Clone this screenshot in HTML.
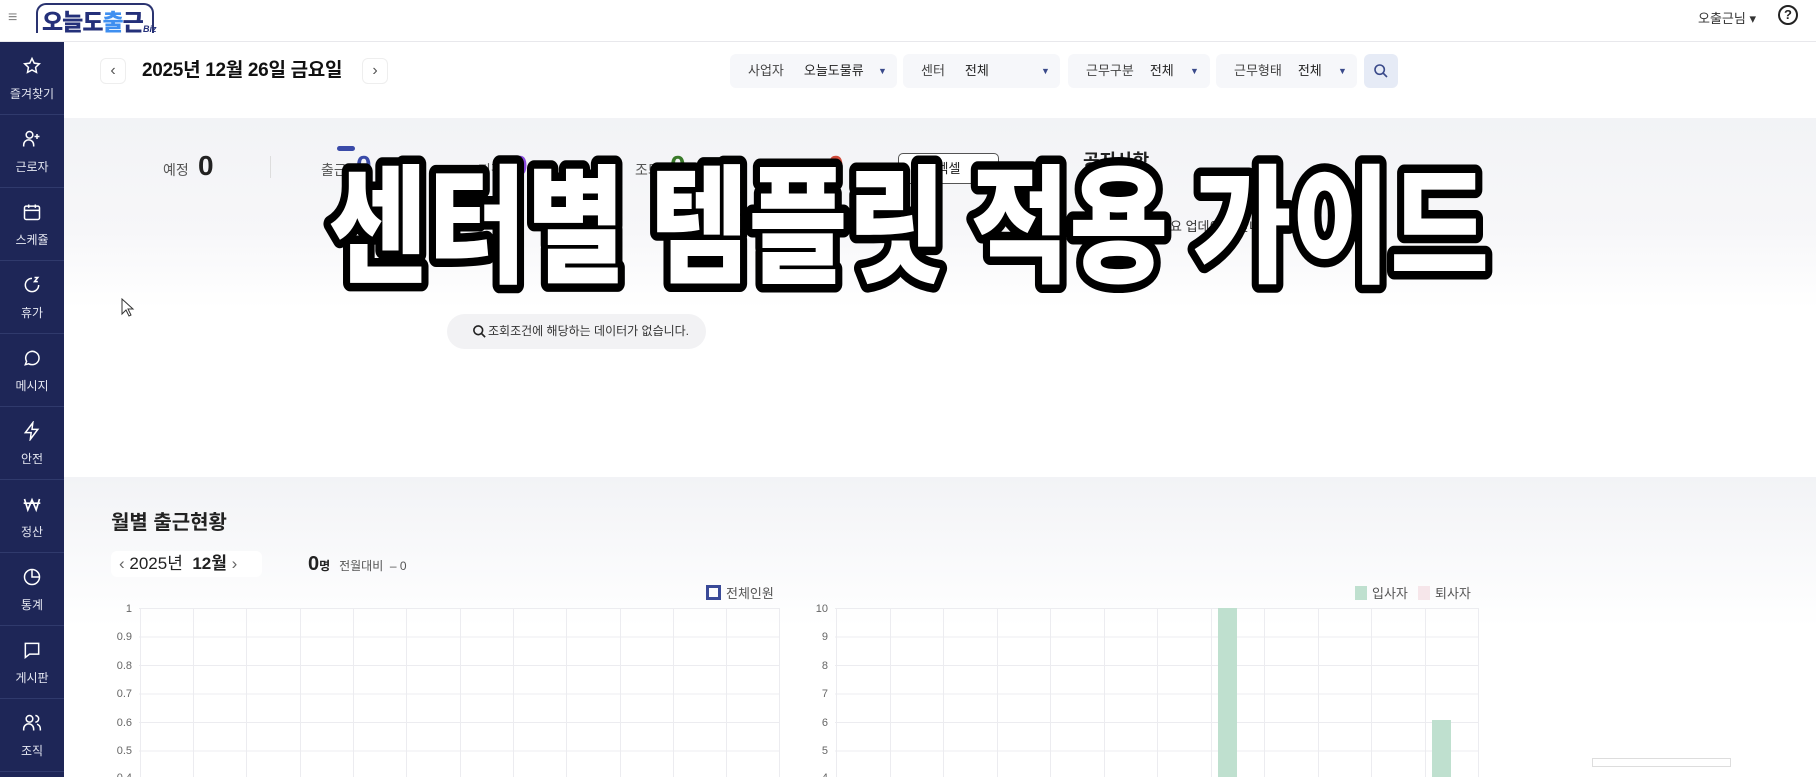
<!DOCTYPE html>
<html><head><meta charset="utf-8"><style>
*{margin:0;padding:0;box-sizing:border-box}
body{width:1816px;height:777px;overflow:hidden;background:#fff;font-family:"Liberation Sans","Noto Sans CJK KR",sans-serif;color:#222;position:relative}
.a{position:absolute}
#hdr{left:0;top:0;width:1816px;height:42px;background:#fff;border-bottom:1px solid #e8e8ec}
#side{left:0;top:42px;width:64px;height:735px;background:#1e2657}
.si{position:absolute;left:0;width:64px;height:73px;border-bottom:1px solid #303a6c;color:#e6e8f2;text-align:center;font-size:12px}
.si svg{position:absolute;left:22px;top:14px}
.si span{position:absolute;left:0;right:0;top:43px}
.g1{left:64px;top:118px;width:1752px;height:190px;background:linear-gradient(#f2f3f6,#f7f7f9 60%,#fff)}
.g2{left:64px;top:477px;width:1752px;height:150px;background:linear-gradient(#f2f3f6,#fff)}
.flt{top:54px;height:34px;background:#f6f7fa;border-radius:6px;font-size:13px;color:#444;line-height:34px}
.tri{position:absolute;top:0;font-size:9px;color:#3a4a8a}
</style></head><body>
<div class="a" id="hdr"></div>
<div class="a" style="left:8px;top:9px;font-size:16px;color:#888">≡</div>
<div class="a" style="left:36px;top:3px;width:118px;height:30px;border:2px solid #2a3370;border-bottom:none;border-radius:10px 10px 0 0;background:#fff"></div>
<div class="a" style="left:42px;top:8px;font-size:23px;font-weight:900;color:#24307a;letter-spacing:-1px;line-height:28px">오늘도<span style="color:#3f8ff0">출</span>근</div>
<div class="a" style="left:143px;top:24px;font-size:9px;font-style:italic;font-weight:bold;color:#24307a">Biz</div>
<div class="a" style="left:1698px;top:8px;font-size:13px;color:#333">오출근님 ▾</div>
<div class="a" style="left:1778px;top:5px;width:20px;height:20px;border:2px solid #222;border-radius:50%;text-align:center;font-size:13px;font-weight:bold;line-height:16px">?</div>

<div class="a" id="side">
<div class="si" style="top:0"><svg width="20" height="20" viewBox="0 0 24 24" fill="none" stroke="#fff" stroke-width="1.8"><path d="M12 3l2.7 5.6 6.1.8-4.5 4.2 1.1 6.1L12 16.8 6.6 19.7l1.1-6.1L3.2 9.4l6.1-.8z"/></svg><span>즐겨찾기</span></div>
<div class="si" style="top:73px"><svg width="20" height="20" viewBox="0 0 24 24" fill="none" stroke="#fff" stroke-width="1.8"><circle cx="9" cy="7" r="4"/><path d="M2 21v-2a6 6 0 0112 0v2M18 6v6M15 9h6"/></svg><span>근로자</span></div>
<div class="si" style="top:146px"><svg width="20" height="20" viewBox="0 0 24 24" fill="none" stroke="#fff" stroke-width="1.8"><rect x="3" y="5" width="18" height="16" rx="2"/><path d="M3 10h18M8 3v4M16 3v4"/></svg><span>스케쥴</span></div>
<div class="si" style="top:219px"><svg width="20" height="20" viewBox="0 0 24 24" fill="none" stroke="#fff" stroke-width="1.8"><path d="M20 12a8 8 0 11-8-8"/><path d="M15 3h4l-4 5h4"/></svg><span>휴가</span></div>
<div class="si" style="top:292px"><svg width="20" height="20" viewBox="0 0 24 24" fill="none" stroke="#fff" stroke-width="1.8"><path d="M4 20l1.5-4A8 8 0 1112 20a8 8 0 01-4-1z"/></svg><span>메시지</span></div>
<div class="si" style="top:365px"><svg width="20" height="20" viewBox="0 0 24 24" fill="none" stroke="#fff" stroke-width="1.8"><path d="M13 2L4 14h7l-1 8 9-12h-7z"/></svg><span>안전</span></div>
<div class="si" style="top:438px"><svg width="20" height="20" viewBox="0 0 24 24" fill="none" stroke="#fff" stroke-width="2"><path d="M3 6l4 13 5-12 5 12 4-13M2 11h20"/></svg><span>정산</span></div>
<div class="si" style="top:511px"><svg width="20" height="20" viewBox="0 0 24 24" fill="none" stroke="#fff" stroke-width="1.8"><circle cx="12" cy="12" r="9"/><path d="M12 3v9h9"/></svg><span>통계</span></div>
<div class="si" style="top:584px"><svg width="20" height="20" viewBox="0 0 24 24" fill="none" stroke="#fff" stroke-width="1.8"><path d="M4 4h16v13H9l-5 4z"/></svg><span>게시판</span></div>
<div class="si" style="top:657px"><svg width="20" height="20" viewBox="0 0 24 24" fill="none" stroke="#fff" stroke-width="1.8"><circle cx="9" cy="7" r="4"/><path d="M2 21v-2a6 6 0 0112 0v2M16 3a4 4 0 010 8M22 21v-2a6 6 0 00-4-5.6"/></svg><span>조직</span></div>
</div>

<div class="a" style="left:100px;top:58px;width:26px;height:26px;border:1px solid #eee;border-radius:6px;text-align:center;line-height:24px;color:#555">‹</div>
<div class="a" style="left:142px;top:58px;font-size:19px;font-weight:bold;color:#111;line-height:26px;letter-spacing:-0.3px">2025년 12월 26일 금요일</div>
<div class="a" style="left:362px;top:58px;width:26px;height:26px;border:1px solid #eee;border-radius:6px;text-align:center;line-height:24px;color:#555">›</div>

<div class="a flt" style="left:730px;width:167px"><span style="margin-left:18px">사업자</span><span style="margin-left:20px;color:#222">오늘도물류</span><span class="tri" style="left:148px">▼</span></div>
<div class="a flt" style="left:903px;width:157px"><span style="margin-left:18px">센터</span><span style="margin-left:20px;color:#222">전체</span><span class="tri" style="left:138px">▼</span></div>
<div class="a flt" style="left:1068px;width:142px"><span style="margin-left:18px">근무구분</span><span style="margin-left:16px;color:#222">전체</span><span class="tri" style="left:122px">▼</span></div>
<div class="a flt" style="left:1216px;width:141px"><span style="margin-left:18px">근무형태</span><span style="margin-left:16px;color:#222">전체</span><span class="tri" style="left:122px">▼</span></div>
<div class="a" style="left:1364px;top:54px;width:34px;height:34px;background:#e6ebf6;border-radius:6px"><svg class="a" style="left:9px;top:9px" width="16" height="16" viewBox="0 0 24 24" fill="none" stroke="#3a4a8a" stroke-width="2.4"><circle cx="10" cy="10" r="7"/><path d="M15 15l6 6"/></svg></div>

<div class="a g1"></div>
<div class="a g2"></div>

<div class="a" style="left:163px;top:160px;font-size:14px;color:#555">예정</div>
<div class="a" style="left:198px;top:150px;font-size:28px;font-weight:bold;color:#222">0</div>
<div class="a" style="left:270px;top:156px;width:1px;height:22px;background:#ddd"></div>
<div class="a" style="left:337px;top:146px;width:18px;height:5px;background:#3a4aa8;border-radius:3px"></div>
<div class="a" style="left:321px;top:160px;font-size:14px;color:#555">출근</div>
<div class="a" style="left:356px;top:150px;font-size:28px;font-weight:bold;color:#3a4aa8">0</div>
<div class="a" style="left:478px;top:160px;font-size:14px;color:#555">지각</div>
<div class="a" style="left:512px;top:150px;font-size:28px;font-weight:bold;color:#8a4ae0">0</div>
<div class="a" style="left:635px;top:160px;font-size:14px;color:#555">조퇴</div>
<div class="a" style="left:670px;top:150px;font-size:28px;font-weight:bold;color:#3a7a2a">0</div>
<div class="a" style="left:793px;top:160px;font-size:14px;color:#555">퇴근</div>
<div class="a" style="left:828px;top:150px;font-size:28px;font-weight:bold;color:#d04a3a">0</div>
<div class="a" style="left:898px;top:153px;width:101px;height:31px;border:1px solid #555;border-radius:5px;background:#fff;font-size:13px;line-height:29px;text-align:center">엑셀</div>
<div class="a" style="left:1083px;top:147px;font-size:18px;font-weight:bold;color:#222">공지사항</div>
<div class="a" style="left:1170px;top:216px;font-size:13px;color:#333">요 업데이트 안내 &nbsp; 20 &nbsp; 2</div>

<div class="a" style="left:447px;top:314px;width:259px;height:35px;background:#f2f2f4;border-radius:18px;font-size:12px;line-height:35px;color:#333;padding-left:41px">조회조건에 해당하는 데이터가 없습니다.</div>
<svg class="a" style="left:472px;top:324px" width="15" height="15" viewBox="0 0 24 24" fill="none" stroke="#222" stroke-width="2.6"><circle cx="10" cy="10" r="7"/><path d="M15 15l6 6"/></svg>
<svg class="a" style="left:121px;top:298px" width="14" height="20" viewBox="0 0 14 20"><path d="M1 1v15l4-4 3 6 2-1-3-6h5z" fill="#fff" stroke="#333" stroke-width="1"/></svg>

<div class="a" style="left:111px;top:506px;font-size:20px;font-weight:bold;color:#222">월별 출근현황</div>
<div class="a" style="left:111px;top:551px;width:151px;height:26px;background:#fff;border-radius:6px;font-size:17px;line-height:26px;color:#222"><span style="margin-left:8px;color:#666">‹</span> 2025년 &nbsp;<b>12월</b> <span style="color:#666">›</span></div>
<div class="a" style="left:308px;top:553px;font-size:20px;font-weight:bold">0<span style="font-size:12px">명</span> <span style="font-size:12px;font-weight:normal;color:#555">&nbsp;전월대비 &nbsp;– 0</span></div>
<div class="a" style="left:706px;top:585px;width:15px;height:15px;border:3px solid #3a4a98"></div>
<div class="a" style="left:726px;top:583px;font-size:13px;color:#555">전체인원</div>
<div class="a" style="left:1355px;top:586px;width:12px;height:14px;background:#bfe0cf"></div>
<div class="a" style="left:1372px;top:583px;font-size:13px;color:#555">입사자</div>
<div class="a" style="left:1418px;top:586px;width:12px;height:14px;background:#f6e6ea"></div>
<div class="a" style="left:1435px;top:583px;font-size:13px;color:#555">퇴사자</div>

<svg class="a" style="left:0;top:0" width="1816" height="777">
<g stroke="#ececf0" stroke-width="1" font-size="11" fill="#666" font-family="Liberation Sans">
<line x1="139" y1="608.5" x2="780" y2="608.5"/><line x1="139" y1="637" x2="780" y2="637"/><line x1="139" y1="665.5" x2="780" y2="665.5"/><line x1="139" y1="694" x2="780" y2="694"/><line x1="139" y1="722.5" x2="780" y2="722.5"/><line x1="139" y1="751" x2="780" y2="751"/>
<line x1="835" y1="608.5" x2="1479" y2="608.5"/><line x1="835" y1="637" x2="1479" y2="637"/><line x1="835" y1="665.5" x2="1479" y2="665.5"/><line x1="835" y1="694" x2="1479" y2="694"/><line x1="835" y1="722.5" x2="1479" y2="722.5"/><line x1="835" y1="751" x2="1479" y2="751"/>
<path d="M140.5 608V777M193.5 608V777M246.5 608V777M300.5 608V777M353.5 608V777M406.5 608V777M460.5 608V777M513.5 608V777M566.5 608V777M620.5 608V777M673.5 608V777M726.5 608V777M779.5 608V777"/>
<path d="M836.5 608V777M890.5 608V777M943.5 608V777M997.5 608V777M1050.5 608V777M1104.5 608V777M1157.5 608V777M1211.5 608V777M1264.5 608V777M1318.5 608V777M1371.5 608V777M1425.5 608V777M1478.5 608V777"/>
<g stroke="none" text-anchor="end">
<text x="132" y="612">1</text><text x="132" y="640">0.9</text><text x="132" y="669">0.8</text><text x="132" y="697">0.7</text><text x="132" y="726">0.6</text><text x="132" y="754">0.5</text><text x="132" y="781">0.4</text>
<text x="828" y="612">10</text><text x="828" y="640">9</text><text x="828" y="669">8</text><text x="828" y="697">7</text><text x="828" y="726">6</text><text x="828" y="754">5</text><text x="828" y="781">4</text>
</g>
</g>
<rect x="1218" y="608" width="19" height="169" fill="#bfe0cf"/>
<rect x="1432" y="720" width="19" height="57" fill="#bfe0cf"/>
<rect x="1592.5" y="758.5" width="138" height="8" fill="#fff" stroke="#ddd"/>
<text x="909" y="272" text-anchor="middle" textLength="1160" lengthAdjust="spacingAndGlyphs" font-family="Noto Sans CJK KR, sans-serif" font-weight="900" font-size="128" fill="#fff" stroke="#000" stroke-width="17" stroke-linejoin="round" paint-order="stroke">센터별 템플릿 적용 가이드</text>
</svg>
</body></html>
